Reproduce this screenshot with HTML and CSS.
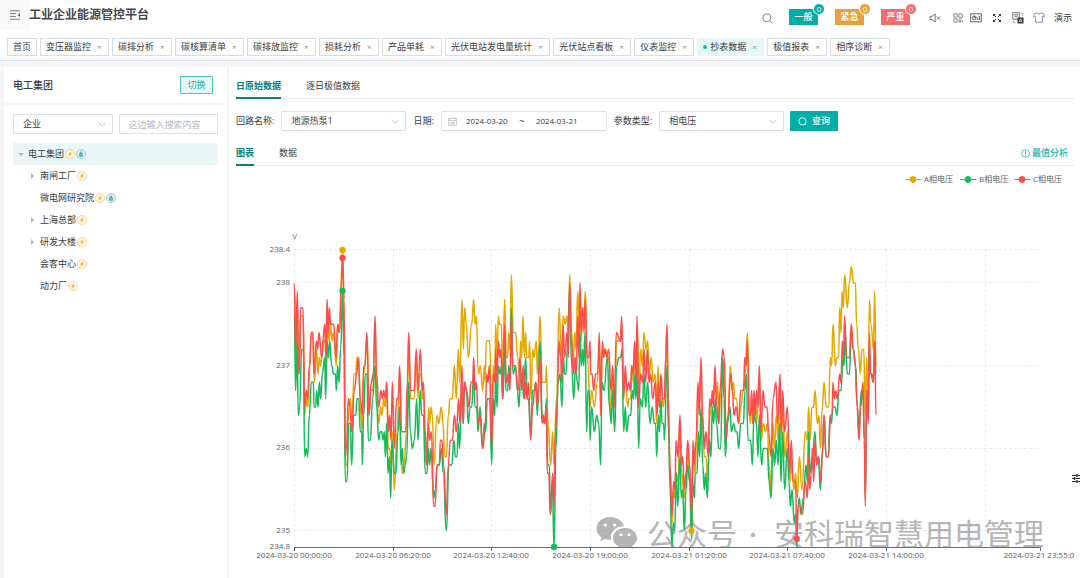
FILE: index.html
```html
<!DOCTYPE html>
<html lang="zh-CN">
<head>
<meta charset="utf-8">
<title>工业企业能源管控平台</title>
<link rel="stylesheet" href="styles.css">
</head>
<body>
<svg class="defs" aria-hidden="true">
  <symbol id="bolt" viewBox="0 0 10 10"><circle cx="5" cy="5" r="4.5" fill="#fff8ec" stroke="#f9c97a" stroke-width=".8"/><path d="M6.400 1.800 2.800 5.400h1.900L3.700 8.300 7.200 4.500H5.400z" fill="#f7ab35"/></symbol>
  <symbol id="drop" viewBox="0 0 10 10"><circle cx="5" cy="5" r="4.500" fill="#e6f3f5" stroke="#8fc3cb" stroke-width=".8"/><path d="M5 1.800C4.200 3.300 2.800 4.500 2.800 6a2.200 2.200 0 0 0 4.400 0C7.200 4.500 5.800 3.300 5 1.800z" fill="#6fb0bb"/></symbol>
  <symbol id="chevron" viewBox="0 0 8 5"><path d="M.6.6 4 4.200 7.400.6" fill="none" stroke="#b4b8c0" stroke-width=".8"/></symbol>
  <symbol id="search" viewBox="0 0 11 11"><circle cx="4.800" cy="4.800" r="4" fill="none" stroke="currentColor" stroke-width=".9"/><path d="m7.800 7.800 2.600 2.600" stroke="currentColor" stroke-width=".9"/></symbol>
  <symbol id="query-icon" viewBox="0 0 9 9"><circle cx="4.500" cy="4.300" r="3.600" fill="none" stroke="currentColor" stroke-width=".9"/><path d="m6.800 7 1.400 1.500" stroke="currentColor" stroke-width=".9"/></symbol>
</svg>

<header class="header">
  <div class="topbar">
    <button class="collapse" aria-label="折叠菜单"><svg viewBox="0 0 12 10" width="12" height="10"><path d="M1 .8h10M1 3.600h6M1 6.400h6M1 9.200h10" stroke="#777" stroke-width="1"/><path d="M11 3v4L8.600 5z" fill="#666"/></svg></button>
    <h1 class="brand">工业企业能源管控平台</h1>
    <button class="icon-btn find" aria-label="搜索"><svg width="11" height="11"><use href="#search"/></svg></button>
    <div class="alerts">
      <button class="alert alert-normal">一般<span class="count">0</span></button>
      <button class="alert alert-urgent">紧急<span class="count">0</span></button>
      <button class="alert alert-severe">严重<span class="count">0</span></button>
    </div>
    <div class="tools">
      <button class="icon-btn tool wide" aria-label="静音"><svg viewBox="0 0 12 10" width="12" height="10"><path d="M1 3.400h2L6.200 1v8L3 6.600H1zM8 3.500l3 3M11 3.500l-3 3" fill="none" stroke="#555" stroke-width=".8"/></svg></button>
      <button class="icon-btn tool narrow" aria-label="二维码"><svg viewBox="0 0 10 10" width="10" height="10" fill="none" stroke="#777" stroke-width=".8"><path d="M.8.8h3.400v3.400H.8zM.8 5.800h3.400v3.400H.8zM5.800 .8h3.400v3.400H5.800zM5.500 5.800h3.700M6 7.500h1.500v1.700H6zM9.200 7v2.500"/></svg></button>
      <button class="icon-btn tool" aria-label="大屏"><svg viewBox="0 0 12 10" width="12" height="10" fill="none" stroke="#555" stroke-width=".9"><path d="M.7.8h10.600v8H.7z"/><circle cx="4.200" cy="4.800" r="1.900"/><path d="M4.200 3v1.800H6M7.700 7V4.500M9.500 7V3"/></svg></button>
      <button class="icon-btn tool" aria-label="全屏"><svg viewBox="0 0 10 10" width="10" height="10"><path d="M1 3.600V1h2.600zM6.400 1H9v2.600zM9 6.400V9H6.400zM3.600 9H1V6.400z" fill="#333"/><path d="m1.500 1.500 2.500 2.500M8.500 1.500 6 4M8.500 8.500 6 6M1.500 8.500 4 6" stroke="#333"/></svg></button>
      <button class="icon-btn tool" aria-label="切换语言"><svg viewBox="0 0 12 12" width="12" height="12"><path d="M.7.7h6.600v6.600H.7z" fill="#fff" stroke="#666" stroke-width=".9"/><path d="M2.300 2.500h3.400v2H2.300zM4 1.500v5" fill="none" stroke="#777" stroke-width=".6"/><path d="M5.500 5.500h6v6h-6z" fill="#333"/><path d="m7 10.300 1.500-3.600L10 10.300M7.500 9.200h2" fill="none" stroke="#fff" stroke-width=".7"/><path d="M9 1.500h1.800v2.200M1.500 9v1.700h2" fill="none" stroke="#777" stroke-width=".7"/></svg></button>
      <button class="icon-btn tool" aria-label="主题"><svg viewBox="0 0 12 11" width="12" height="11"><path d="M4 .8 1 2.200.6 4.800l2-.2v5.600h6.800V4.600l2 .2-.4-2.600L8 .8C7.400 2.400 4.600 2.400 4 .8z" fill="none" stroke="#777" stroke-width=".8"/></svg></button>
    </div>
    <span class="user">演示</span>
  </div>
  <nav class="tabs">
    <a class="tab home" href="#">首页</a>
    <a class="tab" href="#">变压器监控<i class="close">×</i></a>
    <a class="tab" href="#">碳排分析<i class="close">×</i></a>
    <a class="tab" href="#">碳核算清单<i class="close">×</i></a>
    <a class="tab" href="#">碳排放监控<i class="close">×</i></a>
    <a class="tab" href="#">损耗分析<i class="close">×</i></a>
    <a class="tab" href="#">产品单耗<i class="close">×</i></a>
    <a class="tab" href="#">光伏电站发电量统计<i class="close">×</i></a>
    <a class="tab" href="#">光伏站点看板<i class="close">×</i></a>
    <a class="tab" href="#">仪表监控<i class="close">×</i></a>
    <a class="tab active" href="#">抄表数据<i class="close">×</i></a>
    <a class="tab" href="#">极值报表<i class="close">×</i></a>
    <a class="tab" href="#">相序诊断<i class="close">×</i></a>
  </nav>
</header>

<div class="workspace">
  <aside class="sidebar">
    <div class="side-head">
      <h2 class="side-title">电工集团</h2>
      <button class="switch">切换</button>
    </div>
    <div class="side-filter">
      <div class="select"><select aria-label="类型"><option>企业</option></select><svg class="arrow" width="8" height="5"><use href="#chevron"/></svg></div>
      <input class="field" type="text" placeholder="这边输入搜索内容" aria-label="搜索内容">
    </div>
    <ul class="tree">
      <li class="node root"><span class="caret open"></span>电工集团<svg class="tag"><use href="#bolt"/></svg><svg class="tag"><use href="#drop"/></svg></li>
      <li class="node"><span class="caret"></span>南闸工厂<svg class="tag"><use href="#bolt"/></svg></li>
      <li class="node"><span class="caret none"></span>微电网研究院<svg class="tag"><use href="#bolt"/></svg><svg class="tag"><use href="#drop"/></svg></li>
      <li class="node"><span class="caret"></span>上海总部<svg class="tag"><use href="#bolt"/></svg></li>
      <li class="node"><span class="caret"></span>研发大楼<svg class="tag"><use href="#bolt"/></svg></li>
      <li class="node"><span class="caret none"></span>会客中心<svg class="tag"><use href="#bolt"/></svg></li>
      <li class="node"><span class="caret none"></span>动力厂<svg class="tag"><use href="#bolt"/></svg></li>
    </ul>
  </aside>

  <main class="main">
    <div class="controls">
      <div class="subtabs first">
        <button class="subtab on">日原始数据</button>
        <button class="subtab">逐日极值数据</button>
      </div>
      <form class="filters">
        <label for="loop">回路名称:</label>
        <div class="select large"><select id="loop"><option>地源热泵1</option></select><svg class="arrow" width="8" height="5"><use href="#chevron"/></svg></div>
        <label for="from">日期:</label>
        <div class="range">
          <svg viewBox="0 0 9 9" width="9" height="9" fill="none" stroke="#b4b8c0" stroke-width=".7"><path d="M.6 1.400h7.800v7H.6zM.6 3.500h7.800M2.600.4v2M6.400.4v2M2 5.200h5M2 6.800h5"/></svg>
          <input id="from" type="text" value="2024-03-20"><span class="tilde">~</span><input type="text" value="2024-03-21" aria-label="结束日期">
        </div>
        <label for="param">参数类型:</label>
        <div class="select large"><select id="param"><option>相电压</option></select><svg class="arrow" width="8" height="5"><use href="#chevron"/></svg></div>
        <button class="query" type="button"><svg width="9" height="9"><use href="#query-icon"/></svg>查询</button>
      </form>
      <div class="subtabs second">
        <button class="subtab on">图表</button>
        <button class="subtab">数据</button>
        <a class="extreme" href="#"><svg viewBox="0 0 9 9" width="9" height="9"><circle cx="4.500" cy="4.500" r="3.900" fill="none" stroke="currentColor" stroke-width=".8"/><path d="M4.500 2v3M4.500 6v1" stroke="currentColor" stroke-width=".9"/></svg>最值分析</a>
      </div>
    </div>

    <svg class="chart" viewBox="229 166 851 412" role="img" aria-label="相电压曲线">
      <g class="legend">
        <g fill="#e6a800" stroke="#e6a800"><path d="M905.500 179.500h16"/><circle cx="913" cy="179.500" r="3"/></g>
        <g fill="#15bc5c" stroke="#15bc5c"><path d="M960.500 179.500h16"/><circle cx="968" cy="179.500" r="3"/></g>
        <g fill="#ff4d4d" stroke="#ff4d4d"><path d="M1014.500 179.500h16"/><circle cx="1022" cy="179.500" r="3"/></g>
        <text x="924" y="182">A相电压</text><text x="979" y="182">B相电压</text><text x="1033" y="182">C相电压</text>
      </g>
      <path class="grid" d="M294 249.500H1040M294 282.500H1040M294 365.500H1040M294 448.500H1040M294 530.500H1040M294.500 249V547M393.500 249V547M491.500 249V547M590.500 249V547M689.500 249V547M787.500 249V547M886.500 249V547M985.500 249V547"/>
      <path class="axis" d="M294 547.500H1041M294.500 547v4M393.500 547v4M491.500 547v4M590.500 547v4M689.500 547v4M787.500 547v4M886.500 547v4M1040.500 547v4"/>
      <g class="ylabels">
        <text class="unit" x="297" y="239">V</text>
        <text x="290" y="252">238.4</text><text x="290" y="285">238</text><text x="290" y="368">237</text><text x="290" y="450">236</text><text x="290" y="533">235</text><text x="290" y="549">234.8</text>
      </g>
      <g class="xlabels">
        <text x="294" y="558">2024-03-20 00:00:00</text><text x="393" y="558">2024-03-20 06:20:00</text><text x="491" y="558">2024-03-20 12:40:00</text><text x="590" y="558">2024-03-20 19:00:00</text><text x="689" y="558">2024-03-21 01:20:00</text><text x="787" y="558">2024-03-21 07:40:00</text><text x="886" y="558">2024-03-21 14:00:00</text><text x="1039" y="558">2024-03-21 23:55:0</text>
      </g>
      <path id="phase-a" class="line" stroke="#e6a800"/>
      <path id="phase-b" class="line" stroke="#15bc5c"/>
      <path id="phase-c" class="line" stroke="#ff4d4d"/>
      <g class="watermark">
        <path fill-rule="evenodd" d="M610 517c-7.500 0-13.500 5-13.500 11.500 0 3.600 1.900 6.800 5 8.900l-1.300 4 4.600-2.400c1.800.6 3.400.8 5.200.8h1.300c-2-8 5-14 12.700-13.600C622.600 521 617 517 610 517zm-4.600 6.400a1.700 1.700 0 1 1 0 3.400 1.700 1.700 0 0 1 0-3.400zm9.200 0a1.700 1.700 0 1 1 0 3.400 1.700 1.700 0 0 1 0-3.400zM625 528c-6.800 0-12 4.500-12 10s5.200 10 12 10c1.500 0 3-.3 4.300-.7l4 2.200-1.100-3.500c3-2 4.900-4.800 4.900-8 0-5.500-5.300-10-12.100-10zm-4 5.300a1.500 1.500 0 1 1 0 3 1.500 1.500 0 0 1 0-3zm8 0a1.500 1.500 0 1 1 0 3 1.500 1.500 0 0 1 0-3z"/>
        <text x="647" y="545">公众号</text><circle cx="753" cy="535" r="2.200"/><text x="774" y="545">安科瑞智慧用电管理</text>
      </g>
      <g>
        <circle cx="342.500" cy="250" r="3.200" fill="#e6a800"/><circle cx="342.500" cy="258" r="3.200" fill="#ff4d4d"/><circle cx="342.500" cy="291" r="3.200" fill="#15bc5c"/>
        <circle cx="554" cy="547" r="3.200" fill="#15bc5c"/><circle cx="691.500" cy="531" r="3.200" fill="#e6a800"/><circle cx="796.700" cy="539" r="3.200" fill="#ff4d4d"/>
      </g>
    </svg>
    <button class="icon-btn settings" aria-label="设置"><svg viewBox="0 0 8 9" width="8" height="9"><path d="M0 1.500h8M0 4.500h8M0 7.500h8" stroke="#333"/><path d="M5 0v3M2.500 3v3M5 6v3" stroke="#333" stroke-width="1.300"/></svg></button>
  </main>
</div>
<script src="chart.js"></script>
</body>
</html>
```
FILE: styles.css
```css
* { box-sizing: border-box; }
body {
  margin: 0;
  min-height: 100vh;
  display: flex;
  flex-direction: column;
  background: #f5f5f6;
  color: #3a3c40;
  font: 9px/14px "Open Sans", "Noto Sans CJK SC", sans-serif;
  overflow-x: hidden;
}
button, input, select { font: inherit; color: inherit; margin: 0; }
button { padding: 0; border: 0; background: none; cursor: pointer; }
a { color: inherit; text-decoration: none; }
h1, h2 { margin: 0; }
.defs { position: absolute; width: 0; height: 0; }

.header { background: #fff; border-bottom: 1px solid #dfe1ea; }
.topbar { display: flex; align-items: center; height: 30px; padding-right: 8px; }
.collapse {
  display: grid; place-items: center;
  width: 29px; height: 30px;
  background: #fafafa;
}
.brand { flex: 1; font-size: 12px; line-height: 30px; font-weight: 700; color: #45474b; }
.icon-btn { display: grid; place-items: center; color: #777; }
.find { margin: 6px 16px 0 0; }
.alerts { display: flex; gap: 17px; margin-top: 4px; }
.alert {
  position: relative;
  width: 29px; height: 16px;
  color: #fff;
  line-height: 16px;
  font-weight: 500;
}
.alert-normal, .alert-normal .count { background: #00ada7; }
.alert-urgent, .alert-urgent .count { background: #e6a23c; }
.alert-severe, .alert-severe .count { background: #f56c6c; }
.count {
  position: absolute;
  top: -6px; right: -7px;
  width: 12px; height: 12px;
  border: 1px solid #fff;
  border-radius: 6px;
  font-size: 8px;
  line-height: 10px;
  font-weight: 400;
}
.tools { display: flex; margin: 5px 4px 0 9px; }
.tool { width: 21px; height: 14px; }
.tool.wide { width: 32px; }
.tool.narrow { width: 15px; }
.user { padding-top: 5px; }

.tabs { display: flex; gap: 3px; padding: 8px 7px 4px; }
.tab {
  display: flex;
  align-items: center;
  height: 18px;
  padding: 0 7px 0 5px;
  border: 1px solid #d8dce5;
  white-space: nowrap;
}
.tab.home { padding: 0 5px; }
.close { width: 10px; padding-left: 6px; font-size: 8px; font-style: normal; color: #888; }
.tab.active { background: #e5f7f6; border-color: #e5f7f6; }
.tab.active::before {
  content: "";
  width: 4px; height: 4px;
  margin-right: 3px;
  border-radius: 2px;
  background: #1bb5af;
}

.workspace { flex: 1; display: flex; gap: 2px; padding: 6px 0 0 4px; }
.sidebar { flex: 0 0 223px; background: #fff; }
.side-head {
  display: flex; align-items: center; justify-content: space-between;
  height: 38px;
  padding: 0 14px 0 9px;
  border-bottom: 2px solid #f5f5f6;
}
.side-title { font-size: 10px; font-weight: 500; }
.switch {
  width: 33px; height: 18px;
  border: 1px solid #4cc6c1;
  border-radius: 1px;
  background: #e5f7f6;
  color: #1bb5af;
}
.side-filter { display: grid; grid-template-columns: 1fr 1fr; gap: 6px; padding: 9px 9px 0; }
.select { position: relative; height: 20px; }
.select.large { width: 125px; }
.select select, .field {
  width: 100%; height: 20px;
  padding: 0 10px 0 9px;
  border: 1px solid #dcdfe6;
  border-radius: 1px;
  background: #fff;
  appearance: none;
  outline: none;
}
.field::placeholder { color: #b4b8c0; }
.arrow { position: absolute; right: 7px; top: 8px; }
.tree { margin: 9px 9px 0; padding: 0; list-style: none; }
.node { display: flex; align-items: center; height: 22px; padding-left: 16px; }
.node.root { padding-left: 4px; background: #e9f8f7; }
.caret { width: 11px; display: flex; justify-content: center; }
.caret::before {
  content: "";
  margin-right: 4px;
  border: 3px solid transparent;
  border-left-color: #b0b4bb;
  border-right-width: 0;
}
.caret.open::before { border: 3px solid transparent; border-top-color: #b0b4bb; border-bottom-width: 0; }
.caret.none::before { visibility: hidden; }
.tag { width: 10px; height: 10px; margin-left: 1px; }

.main { position: relative; flex: 1; min-width: 0; background: #fff; }
.controls { padding: 0 6px 0 7px; }
.subtabs { display: flex; gap: 25px; border-bottom: 1px solid #e8eaee; }
.subtabs.first { height: 32px; }
.subtabs.second { height: 25px; margin-top: 10px; }
.subtab { margin-bottom: -1px; border-bottom: 2px solid transparent; padding-top: 1px; }
.subtab.on { color: #0a7d78; font-weight: 700; border-color: #0a7d78; }
.first .subtab { padding-top: 8px; }
.extreme { display: flex; align-items: center; gap: 2px; margin-left: auto; padding-right: 6px; color: #1bb5af; font-weight: 500; }
.filters { display: flex; align-items: center; gap: 7px; padding-top: 12px; white-space: nowrap; }
.range {
  display: flex; align-items: center;
  width: 166px; height: 20px;
  padding: 0 6px;
  border: 1px solid #dcdfe6;
  border-radius: 1px;
}
.range input { width: 56px; padding: 0; border: 0; outline: 0; text-align: center; font-size: 8px; }
.range svg { margin-right: 2px; }
.tilde { width: 14px; text-align: center; }
.query {
  display: flex; align-items: center; justify-content: center; gap: 5px;
  width: 48px; height: 20px;
  margin-left: -1px;
  border-radius: 1px;
  background: #00ada7;
  color: #fff;
  font-weight: 500;
}

.chart { display: block; width: 100%; height: auto; font-size: 8px; }
.chart text { fill: #5c5e63; }
.chart .unit { fill: #5f6f8c; }
.grid { fill: none; stroke: #ebebed; stroke-dasharray: 3 2; }
.axis { fill: none; stroke: #5c6690; }
.ylabels { text-anchor: end; }
.xlabels { text-anchor: middle; }
.line { fill: none; stroke-width: 1.5; stroke-linejoin: round; }
.watermark { opacity: .6; fill: #858585; }
.chart .watermark text { fill: #858585; font-size: 30px; font-weight: 400; font-family: "Noto Sans CJK SC", sans-serif; }
.settings { position: absolute; right: 0; top: 407px; }
```
FILE: chart.js
```js
// Each block: [left edge, "offset reading ..."]; offsets are thirds of a unit,
// readings are tenths of a volt above 230 V.
const series = {
  a: [
    [230, "193 79 198 70 202 77 206 69 212 76 219 76 224 64 229 66 233 65 240 70 244 74 249 74 253 68 260 72 264 69 268 71 272 70 279 73 285 73 289 70 293 75 297 73 302 75 306 73 311 74 319 70 323 75 328 74 338 84 342 78 346 58 351 58 356 65 361 66 366 63 372 69 377 69 381 71 386 71 391 65 396 62 401 69 405 70 411 73 417 64 422 67 428 67 435 74 440 67 446 63 452 65 456 64 461 66 466 65 470 68 475 60 479 60 483 58 487 62 493 55 501 62 509 69 514 58 518 57 522 58 530 62 536 72 542 66 552 66 559 71 564 66 568 69 573 69 577 66 580 67 586 59 590 58 596 65 599 63 603 65 607 64 612 58 621 64 626 63 634 65 639 63 644 59 649 59"],
    [430, "55 64 60 66 67 66 73 70 79 66 85 72 89 68 96 78 100 72 104 77 109 75 115 71 125 75 131 78 135 75 139 76 145 69 151 70 158 67 163 70 165 68 169 73 179 73 185 63 190 70 194 68 197 75 201 70 205 76 208 75 214 75 218 69 224 78 229 71 233 71 236 74 240 72 244 81 250 74 257 74 263 71 268 69 272 73 275 71 279 76 283 71 287 74 290 71 296 71 299 73 303 66 308 72 312 71 319 73 322 69 326 72 330 76 337 68 347 68 349 70 354 63 362 58 368 62 372 58 379 66 388 77 393 71 400 76 405 75 411 76 415 73 419 81 425 74 430 70 434 74 438 72 443 79 448 75 450 79 454 73 458 77 462 76 466 79 471 72 474 70"],
    [590, "0 65 5 67 13 65 22 68 28 73 32 66 37 72 45 72 56 71 62 64 68 69 73 65 80 73 92 73 95 75 101 67 106 69 113 65 117 66 122 66 126 70 130 68 134 72 138 68 142 75 147 67 152 72 157 70 162 74 168 72 173 73 178 69 184 71 189 68 196 69 199 63 204 70 208 66 213 68 219 65 224 66 230 74 236 62 241 56 247 51 250 55 254 54 258 57 264 56 270 63 275 57 283 54 287 56 294 60 299 56 305 50 309 59 315 57 320 61 325 66 333 69 338 63 343 59 348 59 353 56 360 64 367 66 375 68 380 66 383 68 387 63 391 66 398 71 404 68 408 61 414 64 421 70 427 67 431 68 434 66 440 66 446 63 452 65 460 67 466 69 472 74"],
    [740, "30 63 36 65 40 63 46 66 50 63 58 69 64 61 70 63 77 62 82 63 87 58 92 55 99 63 103 60 109 64 114 61 120 67 124 61 128 65 135 59 142 62 150 56 155 59 159 56 162 55 166 57 172 54 178 59 186 55 196 62 202 61 206 65 210 61 216 65 221 65 225 67 232 63 237 64 241 60 247 65 252 68 259 65 266 65 271 71 275 70 279 75 286 70 290 71 296 71 299 77 303 74 306 79 310 77 314 81 322 77 328 80 334 82 340 80 346 80 350 75 355 72 361 69 366 72 371 72 376 64 380 71 385 65 388 78 393 75 400 72 404 79 408 70"]
  ],
  b: [
    [230, "193 76 197 67 201 73 205 64 209 65 215 72 220 72 224 59 229 60 233 59 238 64 244 68 250 68 252 65 257 65 260 67 264 65 268 68 272 66 277 69 284 71 287 66 291 73 295 71 299 73 305 70 311 69 316 69 319 67 323 70 327 68 332 72 338 79 342 71 346 56 351 56 356 63 361 63 365 58 371 64 377 64 381 66 386 66 391 62 395 62 397 58 401 64 406 69 411 69 415 61 421 61 428 66 435 70 440 65 446 61 451 62 455 62 459 61 463 62 466 59 470 63 474 57 478 59 482 54 486 61 493 57 498 57 504 62 509 65 513 58 517 60 521 57 526 58 530 59 536 68 541 62 547 60 553 61 560 66 564 61 571 67 575 64 580 64 586 57 591 57 595 60 599 58 603 60 611 54 616 55 622 58 628 58 634 60 640 57 649 50"],
    [430, "57 58 65 58 72 61 76 59 81 59 85 63 89 60 96 69 99 63 103 68 109 67 115 63 120 65 125 65 131 69 135 65 140 65 144 62 150 65 158 60 163 63 167 62 172 66 179 66 185 58 190 66 194 64 197 69 201 65 205 70 210 69 215 70 219 66 224 73 228 67 233 67 236 70 240 68 244 77 249 69 257 70 262 67 267 65 272 69 277 69 281 66 287 71 291 66 295 66 302 62 308 67 312 67 317 68 322 64 330 73 337 64 345 63 349 66 353 58 358 58 361 52 367 56 372 48 378 60 384 68 390 69 396 65 400 71 404 69 408 69 412 72 419 79 425 70 431 66 437 70 442 68 446 67 450 74 454 70 458 72 461 70 465 74 470 62 474 67 478 67"],
    [590, "0 61 5 65 13 62 20 64 26 63 32 58 36 68 42 67 52 71 58 65 64 63 68 67 74 62 80 70 86 71 92 71 96 72 101 62 106 65 110 62 117 64 122 64 127 67 131 66 134 69 138 66 141 70 146 60 151 66 157 65 162 69 167 65 173 68 180 63 187 65 193 63 197 63 200 59 205 64 208 62 213 66 216 63 221 63 223 61 231 70 236 62 240 55 246 48 250 51 254 50 259 57 263 53 270 59 274 54 278 55 283 50 288 55 293 58 299 56 305 49 308 56 313 54 316 57 321 57 325 62 329 59 333 65 338 58 343 55 347 57 352 54 358 61 363 59 367 65 371 63 376 66 380 63 386 60 392 60 398 71 402 66 406 59 412 63 420 65 424 62 431 63 437 62 441 62 446 60 452 63 460 63 465 67 469 69 474 61 482 61 487 58 492 64 499 63 504 59"],
    [740, "58 64 65 58 70 60 82 60 87 56 93 54 99 60 104 58 109 61 114 58 119 63 123 56 128 62 134 55 142 60 147 56 151 53 156 55 163 51 167 52 170 48 174 53 178 54 183 52 190 54 198 58 202 56 206 62 210 57 217 59 225 62 230 58 235 59 241 55 247 59 252 64 259 59 265 59 270 64 274 63 279 65 285 65 291 64 297 67 303 67 309 71 312 70 316 74 322 69 328 69 334 74 340 72 347 70 352 65 357 62 364 67 369 66 373 61 376 54 380 67 384 64 388 72 392 69 400 68 404 73 408 69"]
  ],
  c: [
    [230, "193 80 197 72 202 79 206 69 209 70 212 77 219 77 224 65 229 67 233 66 238 70 244 74 248 74 252 69 259 73 263 72 267 74 275 71 284 75 288 71 291 78 295 74 298 77 302 75 311 75 318 71 323 75 328 74 334 80 338 83 342 78 346 59 349 60 355 66 360 65 365 62 373 67 380 69 385 71 391 66 397 64 401 70 404 70 411 74 417 64 424 68 430 69 435 76 440 69 446 65 453 67 457 66 461 67 466 66 470 68 475 62 479 64 483 61 487 68 493 60 500 66 505 66 509 70 515 62 527 62 532 68 536 74 542 67 552 67 559 72 564 67 571 72 577 67 580 68 586 62 590 58 595 63 599 61 604 62 611 53 615 53 621 58 628 58 631 61 636 61 641 58 649 52"],
    [430, "55 58 61 61 67 61 73 64 79 62 86 66 90 63 96 70 100 63 104 68 110 67 117 65 123 68 128 68 131 71 135 67 139 68 145 63 150 64 158 60 165 62 170 69 174 68 178 70 185 60 190 69 195 68 197 72 201 68 205 73 209 71 213 72 217 66 224 75 229 68 235 69 240 67 244 76 248 70 255 70 265 67 270 71 275 67 280 70 284 66 287 68 291 66 295 68 302 61 308 65 314 67 318 68 322 65 330 71 336 63 340 64 343 63 349 65 352 57 356 57 361 52 368 57 372 53 376 62 381 65 387 73 392 71 395 68 399 75 404 71 411 74 415 71 419 80 424 73 430 69 436 71 439 69 443 76 447 71 450 80 454 74 458 77 462 74 466 78 471 71 476 71"],
    [590, "0 73 2 69 6 69 11 67 17 69 23 69 28 74 32 64 37 73 41 71 45 72 50 71 56 72 63 67 68 70 73 65 79 74 91 73 95 76 101 66 106 70 111 67 116 68 121 67 125 70 129 69 134 73 138 68 141 76 146 65 152 69 158 68 162 72 167 68 172 72 177 68 182 69 188 66 196 68 201 64 205 68 208 65 213 69 218 66 223 66 227 71 231 75 235 66 240 58 246 52 251 56 255 55 258 61 264 59 270 64 274 58 278 59 283 55 288 57 293 61 299 58 305 52 309 61 313 58 318 61 324 68 328 64 333 71 338 64 343 60 348 62 355 59 359 66 363 65 367 67 370 65 375 70 380 65 386 63 390 67 398 72 403 71 408 61 414 64 422 69 427 67 432 64 438 65 446 63 452 67 461 67 464 71 468 70 472 73 477 64 481 64 485 67 488 63 492 67 496 64 500 67 504 65"],
    [740, "58 70 63 62 69 67 75 65 81 65 86 62 93 59 99 66 108 68 113 63 120 69 124 62 128 67 134 62 142 65 149 57 154 61 159 56 167 56 170 49 175 53 181 53 187 52 196 56 202 54 206 59 209 55 214 57 217 60 221 56 225 61 230 58 236 59 242 56 248 60 252 64 258 59 265 59 272 64 276 64 279 68 283 66 287 67 292 66 299 69 303 68 307 73 310 71 314 76 319 71 328 71 334 75 340 72 346 70 350 66 357 61 362 65 369 68 373 61 376 53 380 67 385 63 388 74 392 69 396 69 400 68 404 73 408 64"]
  ]
};

for (const [phase, blocks] of Object.entries(series)) {
  const points = [];
  for (const [left, text] of blocks) {
    const n = text.split(" ").map(Number);
    for (let i = 0; i < n.length; i += 2) {
      points.push([left + n[i] / 3, 283 + (80 - n[i + 1]) * 8.27]);
    }
  }
  let d = `M${points[0]}`;
  for (let i = 1; i < points.length; i++) {
    const [x0, y0] = points[i - 1];
    const [x1, y1] = points[i];
    const mid = (x0 + x1) / 2;
    d += `C${mid},${y0} ${mid},${y1} ${x1},${y1}`;
  }
  document.getElementById(`phase-${phase}`).setAttribute("d", d);
}
```
